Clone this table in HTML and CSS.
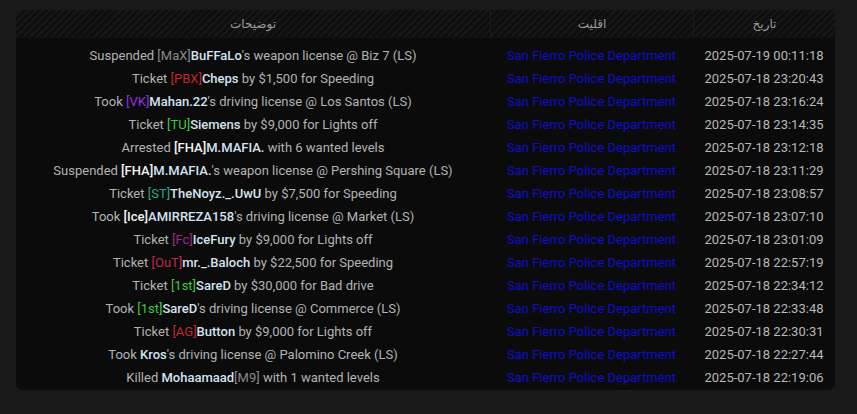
FILE: index.html
```html
<!DOCTYPE html>
<html lang="fa">
<head>
<meta charset="utf-8">
<link rel="stylesheet" href="styles.css">
</head>
<body>
<div class="card">
  <div class="row head">
    <div class="cell hd">توضیحات</div>
    <div class="cell hd sep">اقلیت</div>
    <div class="cell hd sep">تاریخ</div>
  </div>
  <div class="rows">
    <div class="row"><div class="cell desc">Suspended <span class="t-grey">[MaX]</span><b>BuFFaLo</b>'s weapon license @ Biz 7 (LS)</div><div class="cell fac">San Fierro Police Department</div><div class="cell date">2025-07-19 00:11:18</div></div>
    <div class="row"><div class="cell desc">Ticket <span class="t-red">[PBX]</span><b>Cheps</b> by $1,500 for Speeding</div><div class="cell fac">San Fierro Police Department</div><div class="cell date">2025-07-18 23:20:43</div></div>
    <div class="row"><div class="cell desc">Took <span class="t-purple">[VK]</span><b>Mahan.22</b>'s driving license @ Los Santos (LS)</div><div class="cell fac">San Fierro Police Department</div><div class="cell date">2025-07-18 23:16:24</div></div>
    <div class="row"><div class="cell desc">Ticket <span class="t-green">[TU]</span><b>Siemens</b> by $9,000 for Lights off</div><div class="cell fac">San Fierro Police Department</div><div class="cell date">2025-07-18 23:14:35</div></div>
    <div class="row"><div class="cell desc">Arrested <span class="t-white">[FHA]</span><b>M.MAFIA.</b> with 6 wanted levels</div><div class="cell fac">San Fierro Police Department</div><div class="cell date">2025-07-18 23:12:18</div></div>
    <div class="row"><div class="cell desc">Suspended <span class="t-white">[FHA]</span><b>M.MAFIA.</b>'s weapon license @ Pershing Square (LS)</div><div class="cell fac">San Fierro Police Department</div><div class="cell date">2025-07-18 23:11:29</div></div>
    <div class="row"><div class="cell desc">Ticket <span class="t-teal">[ST]</span><b>TheNoyz._.UwU</b> by $7,500 for Speeding</div><div class="cell fac">San Fierro Police Department</div><div class="cell date">2025-07-18 23:08:57</div></div>
    <div class="row"><div class="cell desc">Took <span class="t-white">[Ice]</span><b>AMIRREZA158</b>'s driving license @ Market (LS)</div><div class="cell fac">San Fierro Police Department</div><div class="cell date">2025-07-18 23:07:10</div></div>
    <div class="row"><div class="cell desc">Ticket <span class="t-magenta">[Fc]</span><b>IceFury</b> by $9,000 for Lights off</div><div class="cell fac">San Fierro Police Department</div><div class="cell date">2025-07-18 23:01:09</div></div>
    <div class="row"><div class="cell desc">Ticket <span class="t-rose">[OuT]</span><b>mr._.Baloch</b> by $22,500 for Speeding</div><div class="cell fac">San Fierro Police Department</div><div class="cell date">2025-07-18 22:57:19</div></div>
    <div class="row"><div class="cell desc">Ticket <span class="t-green">[1st]</span><b>SareD</b> by $30,000 for Bad drive</div><div class="cell fac">San Fierro Police Department</div><div class="cell date">2025-07-18 22:34:12</div></div>
    <div class="row"><div class="cell desc">Took <span class="t-green">[1st]</span><b>SareD</b>'s driving license @ Commerce (LS)</div><div class="cell fac">San Fierro Police Department</div><div class="cell date">2025-07-18 22:33:48</div></div>
    <div class="row"><div class="cell desc">Ticket <span class="t-red">[AG]</span><b>Button</b> by $9,000 for Lights off</div><div class="cell fac">San Fierro Police Department</div><div class="cell date">2025-07-18 22:30:31</div></div>
    <div class="row"><div class="cell desc">Took <b>Kros</b>'s driving license @ Palomino Creek (LS)</div><div class="cell fac">San Fierro Police Department</div><div class="cell date">2025-07-18 22:27:44</div></div>
    <div class="row"><div class="cell desc">Killed <b>Mohaamaad</b><span class="t-grey">[M9]</span> with 1 wanted levels</div><div class="cell fac">San Fierro Police Department</div><div class="cell date">2025-07-18 22:19:06</div></div>
  </div>
</div>
</body>
</html>
```
FILE: styles.css
```css
html, body {
  margin: 0;
  padding: 0;
  background: #191919;
}
body {
  padding: 10px 22px 0 16px;
  font-family: Roboto, "Liberation Sans", "DejaVu Sans", sans-serif;
  font-size: 13px;
  color: #b3b3b3;
}
.card {
  width: 819px;
  height: 380px;
  background: #0b0b0b;
  border-radius: 7px;
  overflow: hidden;
  box-sizing: border-box;
}
.row {
  display: grid;
  grid-template-columns: 474px 203px 142px;
  height: 23px;
  align-items: center;
}
.head {
  height: 27px;
  background: repeating-linear-gradient(135deg, #0e0e0e 0 3px, #171717 3px 5px);
  border-bottom: 1px solid #121212;
}
.hd {
  height: 100%;
  display: flex;
  align-items: center;
  justify-content: center;
  color: #9a9a9a;
  font-family: "DejaVu Sans", sans-serif;
  font-size: 12px;
}
.sep {
  border-left: 1px solid #1c1c1c;
}
.rows {
  padding-top: 6px;
}
.cell {
  text-align: center;
  white-space: nowrap;
}
.desc b {
  font-weight: 500;
  color: #d3e3f0;
}
.fac {
  color: #0e0ecc;
}
.date {
  color: #b8b8b8;
}
.t-grey { color: #8a8a8a; }
.t-red { color: #c8252b; }
.t-purple { color: #9a2be6; }
.t-green { color: #3ccd3c; }
.t-white { color: #f2f2f2; font-weight: 500; }
.t-teal { color: #2aa38a; }
.t-magenta { color: #9d2a8a; }
.t-rose { color: #c4284f; }
```
